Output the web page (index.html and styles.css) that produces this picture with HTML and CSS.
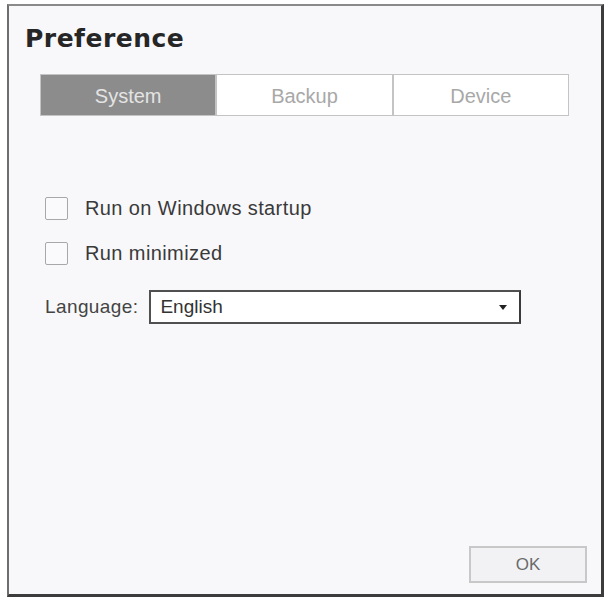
FILE: index.html
```html
<!DOCTYPE html>
<html>
<head>
<meta charset="utf-8">
<link rel="stylesheet" href="styles.css">
</head>
<body>
<div class="dialog">
  <h1 class="title">Preference</h1>
  <div class="tabs">
    <div class="tab active">System</div>
    <div class="tab">Backup</div>
    <div class="tab">Device</div>
  </div>
  <div class="options">
    <label class="check"><span class="box"></span>Run on Windows startup</label>
    <label class="check second"><span class="box"></span>Run minimized</label>
    <div class="lang">
      <span class="lang-label">Language:</span>
      <div class="select"><span>English</span><span class="arrow"></span></div>
    </div>
  </div>
  <div class="footer">
    <div class="ok">OK</div>
  </div>
</div>
</body>
</html>
```
FILE: styles.css
```css
html, body {
  margin: 0;
  padding: 0;
  background: #ffffff;
}
body {
  font-family: "Liberation Sans", Arial, sans-serif;
  padding: 4px 0 0 7px;
}
.dialog {
  box-sizing: border-box;
  width: 597px;
  height: 593px;
  background: #f8f8fb;
  border-left: 2px solid #6e6e6e;
  border-top: 2px solid #8a8a8a;
  border-right: 3px solid #3c3c3c;
  border-bottom: 3px solid #3c3c3c;
  display: flex;
  flex-direction: column;
  padding: 0 0 11px 0;
}
.title {
  margin: 17px 0 0 16px;
  font-family: "DejaVu Sans", "Liberation Sans", sans-serif;
  font-size: 25px;
  font-weight: bold;
  letter-spacing: 0.5px;
  color: #262626;
  line-height: 32px;
}
.tabs {
  margin: 19px 0 0 31px;
  width: 529px;
  height: 42px;
  display: flex;
  box-sizing: border-box;
  border: 1px solid #c4c4c4;
  background: #ffffff;
}
.tab {
  flex: 1;
  display: flex;
  align-items: center;
  justify-content: center;
  padding-top: 3px;
  font-size: 20px;
  color: #a8a8a8;
  border-left: 2px solid #c4c4c4;
}
.tab:first-child {
  border-left: none;
}
.tab.active {
  background: #8c8c8c;
  color: #e4e4e4;
}
.options {
  margin: 80px 0 0 36px;
  display: flex;
  flex-direction: column;
}
.check {
  display: flex;
  align-items: center;
  font-size: 20px;
  letter-spacing: 0.4px;
  color: #3a3a3a;
  height: 24px;
}
.check.second {
  margin-top: 21px;
}
.box {
  width: 21px;
  height: 21px;
  border: 1px solid #a8a8a8;
  border-radius: 2px;
  background: #fafafc;
  margin-right: 17px;
}
.lang {
  margin-top: 25px;
  display: flex;
  align-items: center;
}
.lang-label {
  font-size: 19px;
  letter-spacing: 0.4px;
  color: #444;
  margin-right: 11px;
}
.select {
  box-sizing: border-box;
  width: 372px;
  height: 34px;
  border: 2px solid #505050;
  border-right-color: #3a3a3a;
  background: #ffffff;
  display: flex;
  align-items: center;
  justify-content: space-between;
  padding: 0 12px 0 9px;
  font-size: 19px;
  color: #333;
}
.arrow {
  width: 0;
  height: 0;
  border-left: 4px solid transparent;
  border-right: 4px solid transparent;
  border-top: 5px solid #222;
}
.footer {
  margin-top: auto;
  display: flex;
  justify-content: flex-end;
  padding-right: 14px;
}
.ok {
  box-sizing: border-box;
  width: 118px;
  height: 37px;
  border: 2px solid #c8c8c8;
  background: #f2f2f5;
  display: flex;
  align-items: center;
  justify-content: center;
  font-size: 17px;
  color: #6a6a6a;
}
```
